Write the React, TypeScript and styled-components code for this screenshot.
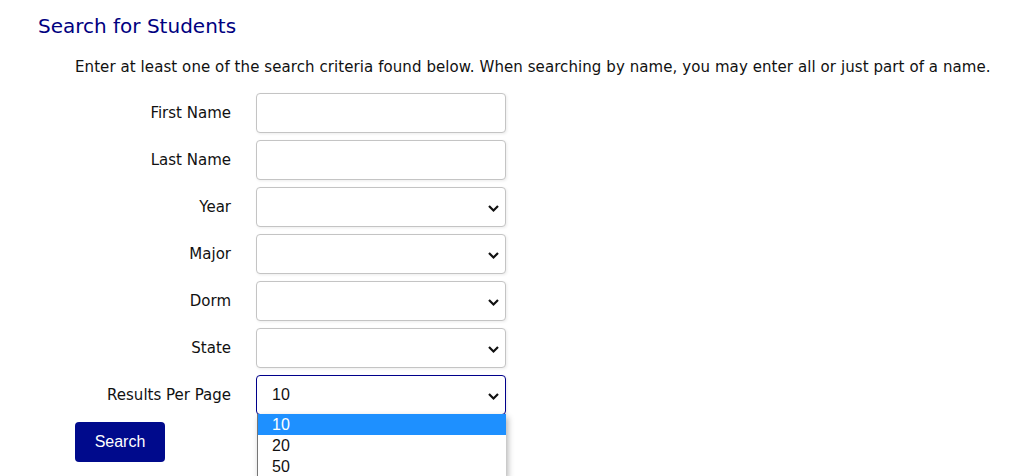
import React from "react";
import styled, { createGlobalStyle } from "styled-components";

const Global = createGlobalStyle`
  html, body { margin: 0; padding: 0; background: #fff; }
  body { font-family: "DejaVu Sans", Verdana, sans-serif; color: #111; overflow: hidden; }
`;

const Page = styled.div`
  padding: 12px 0 0 38px;
  height: 476px;
  box-sizing: border-box;
`;

const Title = styled.h1`
  margin: 0;
  font-size: 20px;
  font-weight: normal;
  color: #000080;
  line-height: 28px;
`;

const Intro = styled.p`
  margin: 17px 0 0 37px;
  font-size: 15px;
  line-height: 20px;
  letter-spacing: 0.08px;
  white-space: nowrap;
`;

const Form = styled.form`
  margin: 16px 0 0 37px;
  display: grid;
  grid-template-columns: 156px 250px;
  column-gap: 25px;
  row-gap: 7px;
  grid-auto-rows: 40px;
  align-items: center;
`;

const Label = styled.label`
  text-align: right;
  font-size: 15px;
`;

const Field = styled.div<{ $focused?: boolean }>`
  position: relative;
  height: 40px;
  box-sizing: border-box;
  border: 1px solid ${(p) => (p.$focused ? "#00008b" : "#c4c4c4")};
  border-radius: 4px;
  background: #fff;
  box-shadow: 1px 1px 3px rgba(0, 0, 0, 0.08);
  display: flex;
  align-items: center;
  padding-left: 15px;
  font-family: "Liberation Sans", Arial, sans-serif;
  font-size: 16px;
  color: #111;
`;

const Chevron = styled.svg`
  position: absolute;
  right: 5px;
  top: 15px;
`;

const Button = styled.button`
  grid-column: 1;
  justify-self: start;
  width: 90px;
  height: 40px;
  border: none;
  border-radius: 4px;
  background: #000a8c;
  color: #fff;
  font-family: "Liberation Sans", Arial, sans-serif;
  font-size: 16px;
  padding: 0;
`;

const Options = styled.ul`
  position: absolute;
  left: 0px;
  top: 38px;
  width: 248px;
  margin: 0;
  padding: 0;
  list-style: none;
  background: #fff;
  border-left: 1px solid #767676;
  box-shadow: 2px 3px 6px rgba(0, 0, 0, 0.3);
  z-index: 2;
`;

const Option = styled.li<{ $active?: boolean }>`
  height: 21px;
  line-height: 21px;
  padding-left: 14px;
  font-family: "Liberation Sans", Arial, sans-serif;
  font-size: 16px;
  background: ${(p) => (p.$active ? "#1e90ff" : "#fff")};
  color: ${(p) => (p.$active ? "#fff" : "#111")};
`;

const Down = () => (
  <Chevron width="13" height="10" viewBox="0 0 13 10">
    <path d="M2 3 L6.5 7.5 L11 3" fill="none" stroke="#111" strokeWidth="2.2" />
  </Chevron>
);

const textFields = ["First Name", "Last Name"];
const selectFields = ["Year", "Major", "Dorm", "State"];

export default function App() {
  return (
    <Page>
      <Global />
      <Title>Search for Students</Title>
      <Intro>
        Enter at least one of the search criteria found below. When searching by name, you may enter all or just part of a name.
      </Intro>
      <Form onSubmit={(e) => e.preventDefault()}>
        {textFields.map((f) => (
          <React.Fragment key={f}>
            <Label>{f}</Label>
            <Field />
          </React.Fragment>
        ))}
        {selectFields.map((f) => (
          <React.Fragment key={f}>
            <Label>{f}</Label>
            <Field>
              <Down />
            </Field>
          </React.Fragment>
        ))}
        <Label>Results Per Page</Label>
        <Field $focused>
          10
          <Down />
          <Options>
            <Option $active>10</Option>
            <Option>20</Option>
            <Option>50</Option>
          </Options>
        </Field>
        <Button type="submit">Search</Button>
      </Form>
    </Page>
  );
}
